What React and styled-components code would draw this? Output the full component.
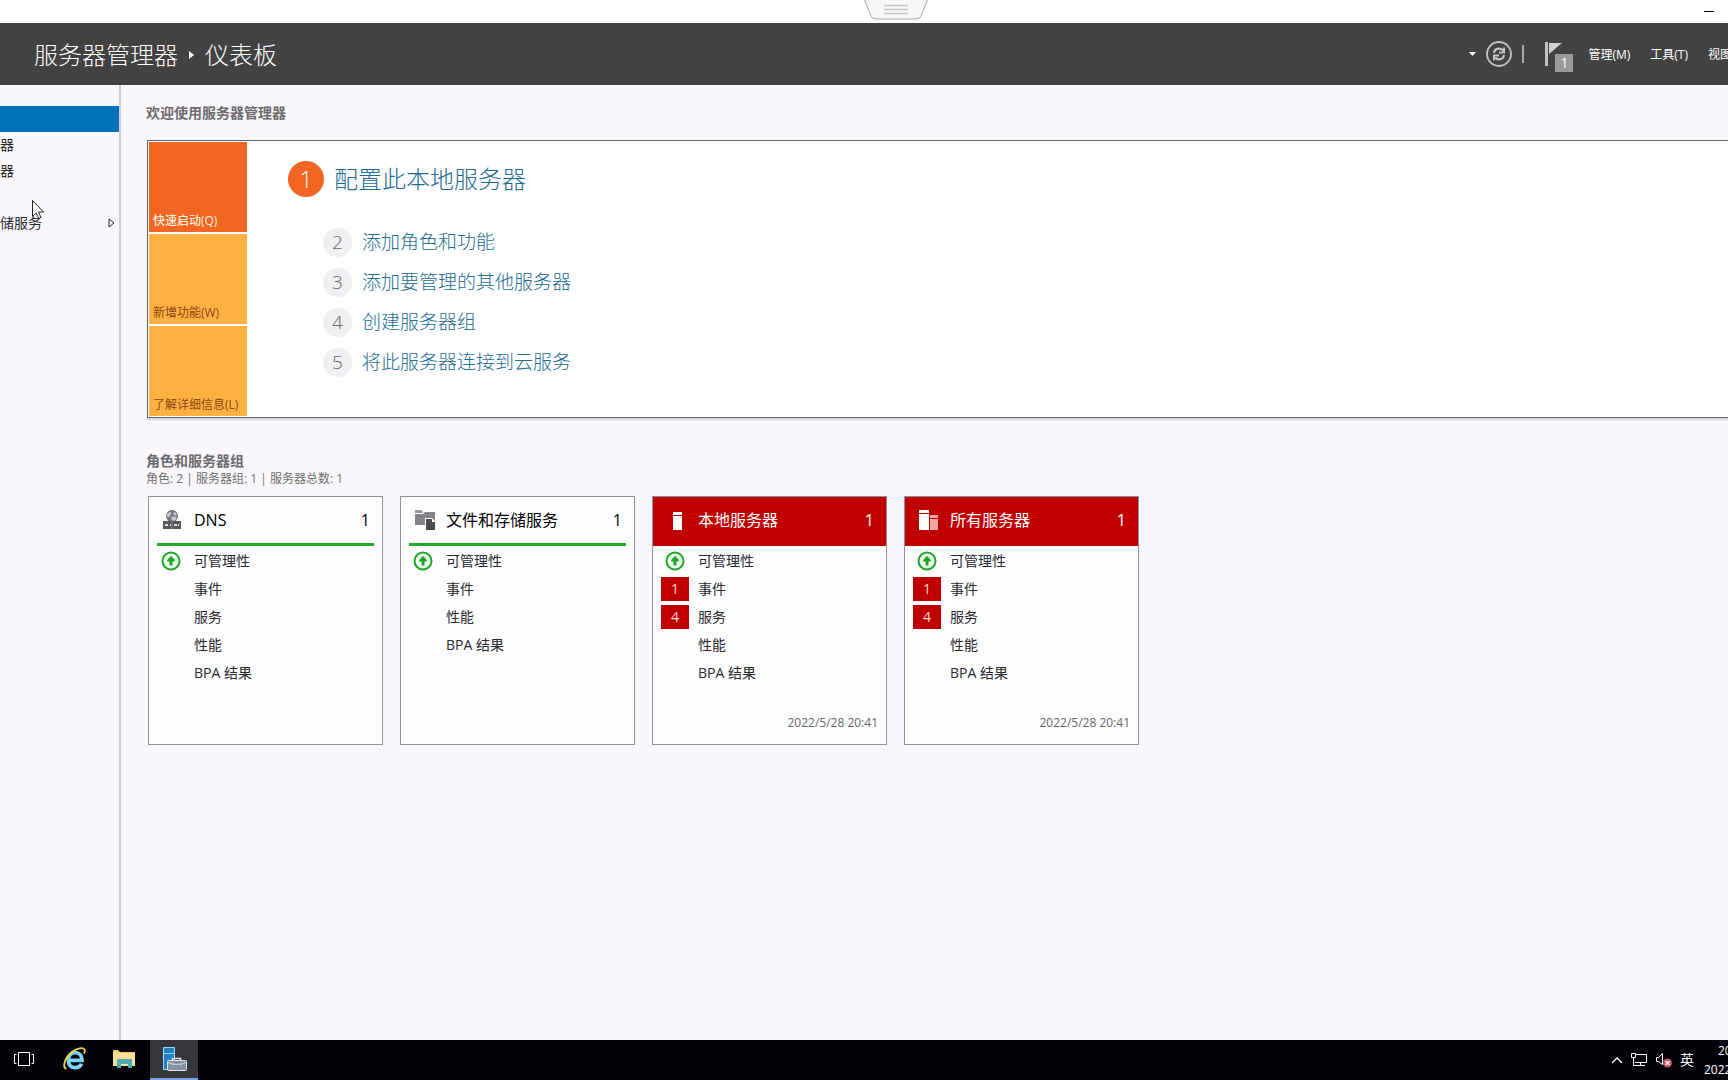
import React from "react";
import styled, { createGlobalStyle, css } from "styled-components";

const GlobalStyle = createGlobalStyle`
  *, *::before, *::after { box-sizing: border-box; }
  body {
    margin: 0;
    overflow: hidden;
    background: #f9f7fb;
    color: #2a2a2e;
    font: 14px/20px "Open Sans", "Noto Sans CJK SC", sans-serif;
  }
  button {
    margin: 0;
    padding: 0;
    border: 0;
    background: none;
    color: inherit;
    font: inherit;
    text-align: left;
  }
  h1, h2, h3, p, ul, ol { margin: 0; padding: 0; font: inherit; list-style: none; }
  a { color: inherit; text-decoration: none; }
  svg { display: block; flex: none; }
`;

const Screen = styled.div`
  display: flex;
  flex-direction: column;
  height: 100vh;
  overflow: hidden;
`;

const TitleStrip = styled.div`
  display: flex;
  flex: none;
  justify-content: flex-end;
  height: 23px;
  padding-right: 14px;
  background: #fff;
`;

const MinimizeButton = styled.button`
  display: flex;
  align-items: center;
  height: 22px;
`;

const ConnectionTab = styled.div`
  position: absolute;
  top: 0;
  left: 50%;
  width: 64px;
  height: 20px;
`;

const Header = styled.header`
  display: flex;
  flex: none;
  align-items: center;
  justify-content: space-between;
  height: 62px;
  padding-left: 34px;
  background: #424242;
  color: #fff;
`;

const Breadcrumb = styled.h1`
  display: flex;
  align-items: center;
  gap: 11px;
  padding-top: 2px;
  font-size: 24px;
  font-weight: 300;
  line-height: 32px;
`;

const HeaderTools = styled.div`
  display: flex;
  align-items: center;
  height: 100%;
  font-size: 12px;
  white-space: nowrap;
`;

const IconButton = styled.button`
  display: flex;
  align-items: center;
  margin-right: ${(p) => p.$after || 0}px;
`;

const Divider = styled.span`
  width: 2px;
  height: 18px;
  margin-right: 20px;
  background: #aaa;
`;

const FlagButton = styled.button`
  position: relative;
  width: 30px;
  height: 36px;
  margin-right: 14px;
`;

const FlagCount = styled.span`
  position: absolute;
  right: 1px;
  bottom: 0;
  width: 18px;
  height: 18px;
  background: #999;
  font-size: 14px;
  line-height: 18px;
  text-align: center;
`;

const Menu = styled.nav`
  display: flex;
  gap: 20px;
  padding-top: 2px;
`;

const LastMenu = styled.button`
  width: 20px;
  overflow: visible;
`;

const Body = styled.div`
  display: flex;
  flex: 1;
  min-height: 0;
`;

const Sidebar = styled.nav`
  flex: none;
  width: 121px;
  padding-top: 21px;
  border-right: 2px solid #d0ced2;
`;

const NavItem = styled.button`
  display: flex;
  align-items: center;
  justify-content: space-between;
  width: 100%;
  height: 26px;
  padding-right: 4px;
  background: ${(p) => (p.$active ? "#0072bc" : "transparent")};
`;

const Main = styled.main`
  flex: 1;
  min-width: 0;
  padding: 18px 0 0 25px;
`;

const SectionTitle = styled.h2`
  color: #6c6a6e;
  font-weight: 700;
`;

const Welcome = styled.section`
  display: flex;
  margin: 17px 0 0 1px;
  padding: 1px;
  border: 1px solid #68666a;
  border-right: 0;
  background: #fff;
  box-shadow: 0 2px 1px #d9d8db;
`;

const Tiles = styled.div`
  display: flex;
  flex-direction: column;
  gap: 2px;
  width: 98px;
`;

const Tile = styled.button`
  display: flex;
  align-items: flex-end;
  height: 90px;
  padding: 0 0 1px 4px;
  background: ${(p) => (p.$active ? "#f26522" : "#fdb143")};
  color: ${(p) => (p.$active ? "#fff0dc" : "#8a4510")};
  font-size: 12px;
  font-weight: ${(p) => (p.$active ? 500 : 400)};
  white-space: nowrap;
`;

const Steps = styled.ol`
  padding: 19px 0 0 41px;
  color: #216c94;
  font-weight: 300;
`;

const Step = styled.li`
  display: flex;
  align-items: center;
  gap: 10px;
  height: 40px;
  padding-left: 35px;
  font-size: 19px;
  line-height: 28px;

  ${(p) =>
    p.$primary &&
    css`
      height: 36px;
      margin-bottom: 25px;
      padding-left: 0;
      font-size: 24px;
      line-height: 36px;
    `}
`;

const StepNumber = styled.span`
  width: ${(p) => (p.$primary ? 36 : 29)}px;
  border-radius: 50%;
  background: ${(p) => (p.$primary ? "#f26522" : "#f0eff1")};
  color: ${(p) => (p.$primary ? "#fff" : "#666")};
  line-height: ${(p) => (p.$primary ? 36 : 29)}px;
  text-align: center;
`;

const Groups = styled.section`
  margin-top: 33px;
`;

const Summary = styled.p`
  margin-bottom: 10px;
  color: #707070;
  font-size: 12px;
  line-height: 15px;
`;

const Cards = styled.div`
  display: flex;
  gap: 17px;
  padding-left: 2px;
`;

const Card = styled.article`
  display: flex;
  flex-direction: column;
  width: 235px;
  height: 249px;
  border: 1px solid #939197;
  background: #fdfcfe;
`;

const CardHeader = styled.h3`
  display: flex;
  flex: none;
  align-items: center;
  height: 49px;
  margin: 0 ${(p) => (p.$alert ? 0 : 8)}px;
  padding: 0 ${(p) => (p.$alert ? "12px 0 13px" : "4px 0 5px")};
  border-bottom: 3px solid ${(p) => (p.$alert ? "#c00000" : "#22ac2a")};
  background: ${(p) => (p.$alert ? "#c00000" : "transparent")};
  color: ${(p) => (p.$alert ? "#fff" : "#000")};
  font-size: 16px;
`;

const CardIcon = styled.span`
  width: 32px;
`;

const CardName = styled.span`
  flex: 1;
`;

const Row = styled.li`
  display: flex;
  align-items: center;
  height: 28px;
  padding-left: 8px;
`;

const RowStatus = styled.span`
  display: flex;
  justify-content: center;
  width: 28px;
  margin-right: 9px;
`;

const Alert = styled.span`
  width: 28px;
  height: 24px;
  background: #c00000;
  color: #ffd9d0;
  line-height: 24px;
  text-align: center;
`;

const Rows = styled.ul`
  padding-top: 1px;
`;

const Stamp = styled.time`
  margin: auto 8px 11px auto;
  color: #666;
  font-size: 12px;
`;

const Taskbar = styled.footer`
  display: flex;
  flex: none;
  justify-content: space-between;
  height: 40px;
  background: #020208;
  color: #fff;
`;

const Apps = styled.div`
  display: flex;
  gap: 2px;
`;

const AppButton = styled.button`
  display: flex;
  align-items: center;
  justify-content: center;
  width: 48px;
  border-bottom: 2px solid ${(p) => (p.$active ? "#76a9e4" : "transparent")};
  background: ${(p) => (p.$active ? "#36363c" : "transparent")};
`;

const Tray = styled.div`
  display: flex;
  align-items: center;
  gap: 7px;
`;

const Clock = styled.div`
  display: flex;
  flex-direction: column;
  width: 24px;
  margin-left: 3px;
  font-size: 12px;
  line-height: 19px;
  white-space: nowrap;
`;

const ClockTime = styled.span`
  padding-left: 14px;
`;

const Pointer = styled.svg`
  position: absolute;
  top: 199px;
  left: 31px;
`;

const ManageableIcon = () => (
  <svg width="20" height="20" viewBox="0 0 20 20">
    <circle cx="10" cy="10" r="8.5" fill="#edffed" stroke="#23a52b" strokeWidth="2" />
    <path d="M10 4.8 13.8 9v1.5h-2.3v4h-3v-4H6.200V9Z" fill="#23a52b" />
  </svg>
);

const DnsIcon = () => (
  <svg width="20" height="22" viewBox="0 0 20 22">
    <circle cx="10" cy="7" r="6" fill="#77757b" />
    <path d="m5 5 3-2 2 1-2 2.500-1 2-2-1ZM11 4l2-1 2 3-2 1ZM9 8l4-.5 2 2-3 2.500-2-1Z" fill="#c9c8cc" />
    <path d="M1 12h18v8H1Z" fill="#58565b" />
    <path d="M3 15h3v2H3Zm5 0h1v2H8Zm4 0h3v2h-3Zm4 0h1v2h-1Z" fill="#dddce0" />
    <path d="M9.500 12h1v8h-1Z" fill="#8c8a90" />
  </svg>
);

const StorageIcon = () => (
  <svg width="22" height="22" viewBox="0 0 22 22">
    <path d="M1 1h6l2 2v1H1Z" fill="#98969b" />
    <path d="M1 5h8l2-2h10v15H11v-2H1Z" fill="#858388" />
    <path d="M11 9h7l4 4v9H11Z" fill="#fdfcfe" />
    <path d="M12 10h6v3h3v8h-9Z" fill="#4c4b50" />
  </svg>
);

const ServerIcon = () => (
  <svg width="22" height="22" viewBox="0 0 22 22">
    <path d="M7 3h9v3H7Zm0 4h9v14H7Z" fill="#fff" />
  </svg>
);

const ServersIcon = () => (
  <svg width="22" height="22" viewBox="0 0 22 22">
    <path d="M1 1h10v3H1Zm0 4h10v16H1Z" fill="#fff" />
    <path d="M12 6h8v3h-8Zm0 4h8v11h-8Z" fill="#f5a3a3" />
  </svg>
);

const RefreshIcon = () => (
  <svg width="26" height="26" viewBox="0 0 26 26" fill="none" stroke="#c4c4c4">
    <circle cx="13" cy="13" r="12" strokeWidth="1.800" />
    <path d="M8 11.800c.4-2.600 2.500-4.200 5-4.200 1.700 0 3 .7 3.900 1.900M18 14.200c-.4 2.600-2.500 4.200-5 4.200-1.700 0-3-.7-3.900-1.900" strokeWidth="2.200" />
    <path d="M18 6.500v5h-5M8 19.500v-5h5" strokeWidth="2" />
  </svg>
);

const FlagIcon = () => (
  <svg width="20" height="26" viewBox="0 0 20 26">
    <path d="M1 1h3v24H1Z" fill="#c2c2c2" />
    <path d="M5 2h13L5 13Z" fill="#d0d0d0" />
  </svg>
);

const TaskViewIcon = () => (
  <svg width="22" height="16" viewBox="0 0 22 16" fill="none" stroke="#fff">
    <path d="M5.500 1.500h11v13h-11ZM3.500 3.500h-2v9h2M18.500 3.500h2v9h-2" />
  </svg>
);

const BrowserIcon = () => (
  <svg width="24" height="24" viewBox="0 0 24 24" fill="none">
    <path d="M19.500 16.800c-1.200 2.500-3.300 3.900-6.200 3.900-4.300 0-7-3-7-7.400s2.700-7.600 7-7.600c4.200 0 6.700 2.900 6.700 7.600H8" stroke="#7fd3f7" strokeWidth="3.800" />
    <path d="M4.500 22C0 20.500 2.500 10.500 10 5c5-3.600 11-5 12.500-2.500.7 1.200.2 2.700-.6 4" stroke="#f0cf4c" strokeWidth="1.800" />
  </svg>
);

const FolderIcon = () => (
  <svg width="24" height="22" viewBox="0 0 24 22">
    <path d="M1 2h5l2 2h15v4H1Z" fill="#f0c565" />
    <path d="M1 4h5l2 1h15v13H1Z" fill="#fbdf93" />
    <path d="M5 20v-9h15v9h-4v-4H9v4Z" fill="#4fa9b4" />
  </svg>
);

const ManagerIcon = () => (
  <svg width="26" height="26" viewBox="0 0 26 26">
    <path d="M2.500 1.500h11v22h-11Z" fill="#1d7fc4" stroke="#9fd4f5" />
    <path d="M3 7.500h10" stroke="#9fd4f5" />
    <path d="M11.500 15v-2.500h8V15" fill="none" stroke="#e6eef5" strokeWidth="1.500" />
    <rect x="6.500" y="14.500" width="19" height="10" rx="1" fill="#8792a0" stroke="#dfe6ee" />
    <path d="M7 16.500q9 4 18 0M12 17.500v2m8-2v2" fill="none" stroke="#c9d2dc" />
  </svg>
);

const NetworkIcon = () => (
  <svg width="18" height="16" viewBox="0 0 18 16" fill="none" stroke="#fff">
    <path d="M5.500 2.500h11v8H5M10.500 10.500v3M6 13.500h9M1.500 1.500h4v4h-4ZM3.500 5.500v8H6" />
  </svg>
);

const VolumeIcon = () => (
  <svg width="18" height="16" viewBox="0 0 18 16" fill="none">
    <path d="M1.500 5.500h2l4-4v11l-4-3h-2Z" stroke="#fff" />
    <circle cx="12.500" cy="11" r="4.500" fill="#c65060" />
    <path d="m10.500 9 4 4m0-4-4 4" stroke="#fff" strokeWidth="1.300" />
  </svg>
);

const navItems = [
  { id: "dashboard", text: "", active: true },
  { id: "local", text: "器" },
  { id: "all", text: "器" },
  { id: "dns", text: "" },
  { id: "storage", text: "储服务", expandable: true },
];

const tiles = ["快速启动(Q)", "新增功能(W)", "了解详细信息(L)"];

const steps = ["配置此本地服务器", "添加角色和功能", "添加要管理的其他服务器", "创建服务器组", "将此服务器连接到云服务"];

const allRows = ["可管理性", "事件", "服务", "性能", "BPA 结果"];

const cards = [
  { name: "DNS", Icon: DnsIcon, rows: allRows },
  { name: "文件和存储服务", Icon: StorageIcon, rows: allRows.filter((r) => r !== "服务") },
  { name: "本地服务器", Icon: ServerIcon, rows: allRows, alerts: { 事件: 1, 服务: 4 }, time: "2022/5/28 20:41" },
  { name: "所有服务器", Icon: ServersIcon, rows: allRows, alerts: { 事件: 1, 服务: 4 }, time: "2022/5/28 20:41" },
];

function GroupCard({ name, Icon, rows, alerts, time }) {
  return (
    <Card>
      <CardHeader $alert={!!alerts}>
        <CardIcon><Icon /></CardIcon>
        <CardName>{name}</CardName>
        <span>1</span>
      </CardHeader>
      <Rows>
        {rows.map((row, i) => (
          <Row key={row}>
            <RowStatus>
              {i === 0 && <ManageableIcon />}
              {alerts?.[row] && <Alert>{alerts[row]}</Alert>}
            </RowStatus>
            <button>{row}</button>
          </Row>
        ))}
      </Rows>
      {time && <Stamp>{time}</Stamp>}
    </Card>
  );
}

export default function App() {
  return (
    <Screen>
      <GlobalStyle />
      <TitleStrip>
        <MinimizeButton aria-label="最小化">
          <svg width="10" height="1"><path d="M0 .5h10" stroke="#000" /></svg>
        </MinimizeButton>
      </TitleStrip>
      <ConnectionTab>
        <svg width="64" height="20" viewBox="0 0 64 20">
          <path d="M.5 0 7 16q1 3 4 3h42q3 0 4-3L63.500 0" fill="#f7f6f8" stroke="#a9a8ab" />
          <path d="M20 5.500h24M20 9.500h24M20 13.500h24" stroke="#c4c3c6" strokeWidth="1.500" />
        </svg>
      </ConnectionTab>
      <Header>
        <Breadcrumb>
          <span>服务器管理器</span>
          <svg width="5" height="8"><path d="M0 0 5 4 0 8Z" fill="#fff" /></svg>
          <span>仪表板</span>
        </Breadcrumb>
        <HeaderTools>
          <IconButton $after={10} aria-label="历史记录">
            <svg width="7" height="4"><path d="M0 0h7L3.500 4Z" fill="#fff" /></svg>
          </IconButton>
          <IconButton $after={10} aria-label="刷新"><RefreshIcon /></IconButton>
          <Divider />
          <FlagButton aria-label="通知">
            <FlagIcon />
            <FlagCount>1</FlagCount>
          </FlagButton>
          <Menu>
            <button>管理(M)</button>
            <button>工具(T)</button>
            <LastMenu>视图</LastMenu>
          </Menu>
        </HeaderTools>
      </Header>
      <Body>
        <Sidebar>
          {navItems.map(({ id, text, active, expandable }) => (
            <NavItem key={id} $active={active} aria-label={text ? undefined : id}>
              {text}
              {expandable && (
                <svg width="7" height="10"><path d="M1 1v8l5-4Z" fill="none" stroke="#222" /></svg>
              )}
            </NavItem>
          ))}
        </Sidebar>
        <Main>
          <SectionTitle>欢迎使用服务器管理器</SectionTitle>
          <Welcome>
            <Tiles>
              {tiles.map((tile, i) => <Tile key={tile} $active={i === 0}>{tile}</Tile>)}
            </Tiles>
            <Steps>
              {steps.map((step, i) => (
                <Step key={step} $primary={i === 0}>
                  <StepNumber $primary={i === 0}>{i + 1}</StepNumber>
                  <a href="#step">{step}</a>
                </Step>
              ))}
            </Steps>
          </Welcome>
          <Groups>
            <SectionTitle>角色和服务器组</SectionTitle>
            <Summary>角色: 2 | 服务器组: 1 | 服务器总数: 1</Summary>
            <Cards>
              {cards.map((card) => <GroupCard key={card.name} {...card} />)}
            </Cards>
          </Groups>
        </Main>
      </Body>
      <Taskbar>
        <Apps>
          <AppButton aria-label="任务视图"><TaskViewIcon /></AppButton>
          <AppButton aria-label="浏览器"><BrowserIcon /></AppButton>
          <AppButton aria-label="文件资源管理器"><FolderIcon /></AppButton>
          <AppButton $active aria-label="服务器管理器"><ManagerIcon /></AppButton>
        </Apps>
        <Tray>
          <svg width="12" height="8"><path d="m1 7 5-5 5 5" fill="none" stroke="#fff" strokeWidth="1.300" /></svg>
          <NetworkIcon />
          <VolumeIcon />
          <span>英</span>
          <Clock>
            <ClockTime>20</ClockTime>
            <span>2022</span>
          </Clock>
        </Tray>
      </Taskbar>
      <Pointer width="14" height="21" viewBox="0 0 14 21">
        <path d="M1.500 1.500v16l3.700-3.500 2.600 5.500 2.200-1-2.500-5.500h5Z" fill="#fff" stroke="#222" />
      </Pointer>
    </Screen>
  );
}
